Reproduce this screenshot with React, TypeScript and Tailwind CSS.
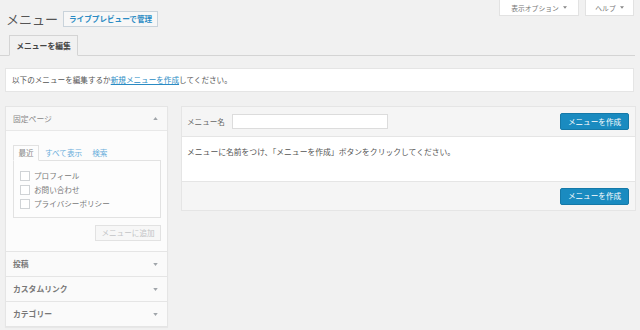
import React from "react";

function Tri({ up = false, color = "#a0a5aa", w = 5, h = 3 }: { up?: boolean; color?: string; w?: number; h?: number }) {
  return (
    <svg width={w} height={h} viewBox="0 0 6 4" className="shrink-0">
      {up ? <polygon points="0,4 6,4 3,0" fill={color} /> : <polygon points="0,0 6,0 3,4" fill={color} />}
    </svg>
  );
}

function Check({ label }: { label: string }) {
  return (
    <div className="flex items-center h-[14px]">
      <span className="w-[10px] h-[10px] border border-[#d0d3d6] bg-white shrink-0" />
      <span className="ml-[4px] text-[7.6px] leading-[10px] text-[#777]">{label}</span>
    </div>
  );
}

function Row({ label }: { label: string }) {
  return (
    <div className="h-[25px] border-t border-[#e5e5e5] flex items-center justify-between pl-[7px] pr-[9px] bg-[#fafafa]">
      <span className="text-[7.8px] leading-[10px] font-semibold text-[#777]">{label}</span>
      <Tri />
    </div>
  );
}

function BlueBtn() {
  return (
    <div className="w-[69px] h-[17px] rounded-[2px] bg-[#1a8bc0] border border-[#1579a8] flex items-center justify-center text-white text-[7.6px] leading-[10px]">
      メニューを作成
    </div>
  );
}

export default function App() {
  return (
    <div className="w-[640px] h-[330px] overflow-hidden bg-[#f1f1f1] text-[#555] font-['Noto_Sans_CJK_JP','Noto_Sans',sans-serif]">
      {/* header row */}
      <div className="flex items-start justify-between">
        <div className="flex items-center mt-[11px] ml-[6px] h-[16px]">
          <h1 className="text-[13px] leading-[16px] text-[#555] font-normal">メニュー</h1>
          <span className="ml-[5px] h-[16px] px-[5px] border border-[#c9d3db] bg-[#f7f7f7] text-[#2a8bc4] text-[7.6px] leading-[10px] font-bold flex items-center">
            ライブプレビューで管理
          </span>
        </div>
        <div className="flex gap-[6px] mr-[6px]">
          <div className="w-[80px] h-[16px] bg-white border border-t-0 border-[#e2e2e2] flex items-center justify-center gap-[4px] text-[6.8px] leading-[10px] text-[#777]">
            表示オプション <Tri color="#888" w={4} h={3} />
          </div>
          <div className="w-[49px] h-[16px] bg-white border border-t-0 border-[#e2e2e2] flex items-center justify-center gap-[4px] text-[6.8px] leading-[10px] text-[#777]">
            ヘルプ <Tri color="#888" w={4} h={3} />
          </div>
        </div>
      </div>

      {/* tabs */}
      <div className="mt-[8px] mr-[5px] flex pl-[9px] border-b border-[#d4d4d4]">
        <div className="-mb-px h-[21px] w-[69px] border border-[#d4d4d4] border-b-[#f1f1f1] bg-[#f1f1f1] flex items-center justify-center text-[7.8px] leading-[10px] font-bold text-[#444]">
          メニューを編集
        </div>
      </div>

      {/* notice */}
      <div className="mt-[12px] ml-[5px] mr-[6px] h-[24px] bg-white border border-[#e5e5e5] flex items-center pl-[6px] text-[7.6px] leading-[10px] text-[#555]">
        以下のメニューを編集するか<span className="text-[#2a8bc4] underline">新規メニューを作成</span>してください。
      </div>

      {/* main */}
      <div className="mt-[14px] flex items-start pl-[5px] pr-[4px] gap-[13px]">
        {/* left column */}
        <div className="w-[163px] border border-[#e5e5e5] bg-[#fafafa] shadow-[0_1px_1px_rgba(0,0,0,0.04)]">
          <div className="h-[24px] border-b border-[#e8e8e8] flex items-center justify-between pl-[7px] pr-[9px] bg-[#f8f8f8]">
            <span className="text-[7.8px] leading-[10px] text-[#888]">固定ページ</span>
            <Tri up />
          </div>
          <div className="h-[120px] pt-[14px] pl-[7px] pr-[6px] flex flex-col bg-[#fcfcfc]">
            <div className="flex items-end h-[15px] text-[7.6px] leading-[10px]">
              <div className="-mb-px h-[16px] w-[26px] border border-[#e2e2e2] border-b-[#fdfdfd] bg-[#fdfdfd] flex items-center justify-center text-[#888] relative z-10">
                最近
              </div>
              <span className="ml-[6px] self-center text-[#6aaedb]">すべて表示</span>
              <span className="ml-[10px] self-center text-[#6aaedb]">検索</span>
            </div>
            <div className="h-[58px] border border-[#e2e2e2] bg-[#fdfdfd] pt-[8px] pl-[6px]">
              <Check label="プロフィール" />
              <Check label="お問い合わせ" />
              <Check label="プライバシーポリシー" />
            </div>
            <div className="mt-[7px] self-end w-[66px] h-[16px] border border-[#e2e2e2] bg-[#f7f7f7] flex items-center justify-center text-[7.6px] leading-[10px] text-[#c2c4c6]">
              メニューに追加
            </div>
          </div>
          <Row label="投稿" />
          <Row label="カスタムリンク" />
          <Row label="カテゴリー" />
        </div>

        {/* right column */}
        <div className="flex-1 border border-[#e5e5e5] bg-[#f5f5f5]">
          <div className="h-[30px] border-b border-[#e5e5e5] flex items-center pl-[5px] pr-[6px]">
            <span className="text-[7.6px] leading-[10px] text-[#666]">メニュー名</span>
            <div className="ml-[7px] w-[156px] h-[15px] bg-white border border-[#dcdcdc]" />
            <div className="ml-auto">
              <BlueBtn />
            </div>
          </div>
          <div className="h-[44px] bg-white pt-[10px] pl-[5px] text-[7.8px] leading-[10px] text-[#555]">
            メニューに名前をつけ、「メニューを作成」ボタンをクリックしてください。
          </div>
          <div className="h-[29px] border-t border-[#e5e5e5] flex items-center justify-end pr-[6px]">
            <BlueBtn />
          </div>
        </div>
      </div>
    </div>
  );
}
